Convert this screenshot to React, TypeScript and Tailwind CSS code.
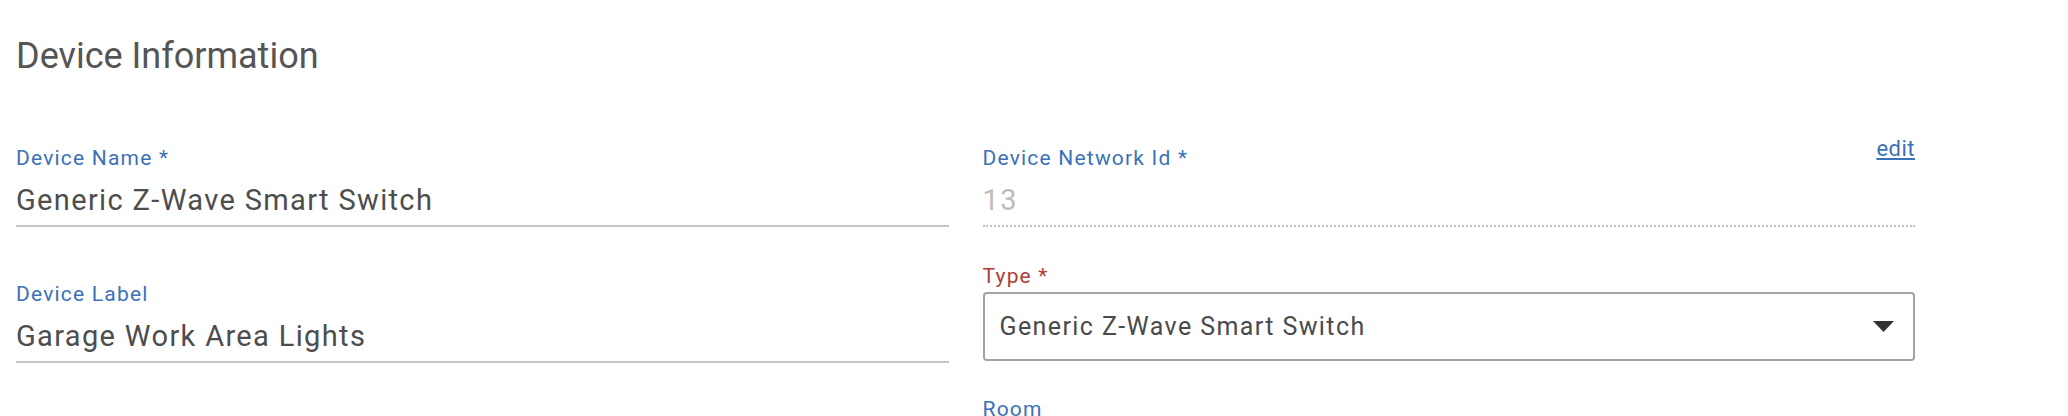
import React from 'react';

const labelCls = "block h-[24px] text-[21px] leading-[24px] tracking-[1.2px]";
const valueCls = "mt-[14px] pb-[9px] text-[29px] leading-[32px] tracking-[1.35px]";

const App = () => {
  return (
    <div className="min-h-screen bg-white font-['Roboto',sans-serif]">
      <div className="pl-[16px] pt-[35px]">
        <h2 className="text-[36px] leading-[42px] font-normal text-[#555555]">Device Information</h2>

        <div className="mt-[69px] flex w-[1899px] gap-[34px]">
          {/* left column */}
          <div className="flex flex-1 flex-col">
            <div>
              <label className={labelCls + " text-[#3b71b8]"}>Device Name *</label>
              <div className={valueCls + " border-b-2 border-[#c6c6c6] text-[#4d4d4d]"}>
                Generic Z-Wave Smart Switch
              </div>
            </div>
            <div className="mt-[55px]">
              <label className={labelCls + " text-[#3b71b8]"}>Device Label</label>
              <div className={valueCls + " border-b-2 border-[#c6c6c6] text-[#4d4d4d]"}>
                Garage Work Area Lights
              </div>
            </div>
          </div>

          {/* right column */}
          <div className="flex flex-1 flex-col">
            <div className="relative">
              <label className={labelCls + " text-[#3b71b8]"}>Device Network Id *</label>
              <a href="#" className="absolute right-0 top-[-9px] text-[22px] leading-[24px] tracking-[0.5px] text-[#3b71b8] underline">
                edit
              </a>
              <div className={valueCls + " border-b-2 border-dotted border-[#bdbdbd] text-[#bdbdbd]"}>
                13
              </div>
            </div>
            <div className="mt-[37px]">
              <label className={labelCls + " text-[#b23b3b]"}>Type *</label>
              <div className="mt-[4px] flex h-[69px] items-center justify-between rounded-[4px] border-2 border-[#a3a3a3] pl-[15px] pr-[19px]">
                <span className="text-[25px] leading-[28px] tracking-[1.4px] text-[#4a4a4a]">Generic Z-Wave Smart Switch</span>
                <svg width="21" height="11" viewBox="0 0 21 11">
                  <path d="M0 0 L21 0 L10.5 11 Z" fill="#333333" />
                </svg>
              </div>
            </div>
            <div className="mt-[36px]">
              <label className={labelCls + " text-[#3b71b8]"}>Room</label>
            </div>
          </div>
        </div>
      </div>
    </div>
  );
};

export default App;
